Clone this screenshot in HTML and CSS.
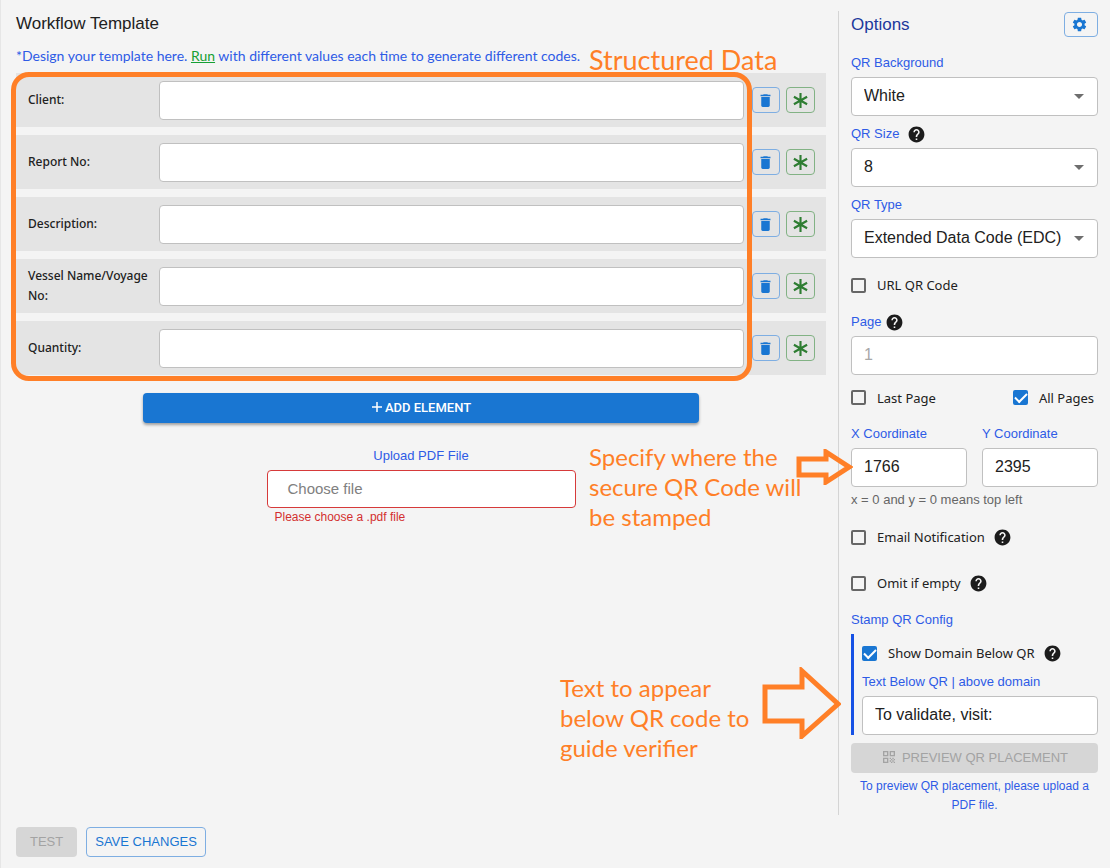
FILE: index.html
```html
<!DOCTYPE html>
<html lang="en">
<head>
<meta charset="utf-8">
<meta name="viewport" content="width=device-width, initial-scale=1">
<title>Workflow Template</title>
<link rel="stylesheet" href="styles.css">
</head>
<body>
<svg class="sprite" aria-hidden="true">
  <symbol id="trash" viewBox="0 0 24 24"><path d="M6 19c0 1.1.9 2 2 2h8c1.1 0 2-.9 2-2V7H6v12zM19 4h-3.500l-1-1h-5l-1 1H5v2h14V4z"/></symbol>
  <symbol id="star" viewBox="0 0 16 16"><path d="M8 1v14M1.800 4.500l12.400 7M14.200 4.500l-12.400 7" fill="none" stroke="currentColor" stroke-width="2"/></symbol>
  <symbol id="help" viewBox="0 0 24 24"><path d="M12 2C6.480 2 2 6.480 2 12s4.480 10 10 10 10-4.480 10-10S17.520 2 12 2zm1 17h-2v-2h2v2zm2.070-7.750l-.9.920C13.450 12.900 13 13.500 13 15h-2v-.5c0-1.100.450-2.100 1.170-2.830l1.240-1.260c.370-.360.590-.860.590-1.410 0-1.100-.9-2-2-2s-2 .9-2 2H8c0-2.210 1.790-4 4-4s4 1.790 4 4c0 .880-.360 1.680-.930 2.250z"/></symbol>
  <symbol id="gear" viewBox="0 0 24 24"><path d="M19.140 12.940c.040-.3.060-.610.060-.940 0-.320-.020-.640-.070-.940l2.030-1.580c.180-.140.230-.410.120-.610l-1.920-3.320c-.120-.220-.370-.290-.590-.220l-2.390.960c-.5-.380-1.030-.7-1.620-.940l-.360-2.540c-.040-.240-.240-.410-.480-.410h-3.840c-.240 0-.430.170-.470.410l-.360 2.540c-.590.240-1.130.570-1.620.940l-2.390-.960c-.220-.080-.470 0-.590.220L2.740 8.870c-.120.210-.080.470.120.610l2.030 1.580c-.050.3-.090.630-.090.940s.020.640.070.940l-2.030 1.580c-.180.140-.230.410-.120.610l1.920 3.320c.120.220.370.290.590.220l2.390-.960c.5.380 1.030.7 1.620.940l.360 2.540c.050.240.240.410.480.410h3.840c.240 0 .440-.170.470-.410l.360-2.540c.590-.240 1.130-.560 1.620-.940l2.390.960c.220.080.470 0 .590-.220l1.920-3.320c.120-.220.070-.470-.120-.610l-2.010-1.580zM12 15.600c-1.980 0-3.600-1.620-3.600-3.600s1.620-3.600 3.600-3.600 3.600 1.620 3.600 3.600-1.620 3.600-3.600 3.600z"/></symbol>
  <symbol id="caret" viewBox="0 0 10 5"><path d="M0 0h10L5 5z"/></symbol>
  <symbol id="qr" viewBox="0 0 24 24"><path d="M3 11h8V3H3v8zm2-6h4v4H5V5zM3 21h8v-8H3v8zm2-6h4v4H5v-4zM13 3v8h8V3h-8zm6 6h-4V5h4v4zM19 19h2v2h-2zM13 13h2v2h-2zM15 15h2v2h-2zM13 17h2v2h-2zM15 19h2v2h-2zM17 17h2v2h-2zM17 13h2v2h-2zM19 15h2v2h-2z"/></symbol>
</svg>

<div class="page">
  <main class="template">
    <h1 class="title">Workflow Template</h1>
    <p class="hint">*Design your template here. <a class="run" href="#">Run</a> with different values each time to generate different codes.</p>

    <div class="rows">
      <div class="row">
        <label class="row-label" for="client">Client:</label>
        <input class="field" id="client" type="text">
        <button class="icon-btn" type="button" aria-label="Delete"><svg class="icon"><use href="#trash"/></svg></button>
        <button class="icon-btn green" type="button" aria-label="Required"><svg class="icon"><use href="#star"/></svg></button>
      </div>
      <div class="row">
        <label class="row-label" for="report">Report No:</label>
        <input class="field" id="report" type="text">
        <button class="icon-btn" type="button" aria-label="Delete"><svg class="icon"><use href="#trash"/></svg></button>
        <button class="icon-btn green" type="button" aria-label="Required"><svg class="icon"><use href="#star"/></svg></button>
      </div>
      <div class="row">
        <label class="row-label" for="description">Description:</label>
        <input class="field" id="description" type="text">
        <button class="icon-btn" type="button" aria-label="Delete"><svg class="icon"><use href="#trash"/></svg></button>
        <button class="icon-btn green" type="button" aria-label="Required"><svg class="icon"><use href="#star"/></svg></button>
      </div>
      <div class="row">
        <label class="row-label" for="vessel"><span class="keep">Vessel Name/Voyage</span> No:</label>
        <input class="field" id="vessel" type="text">
        <button class="icon-btn" type="button" aria-label="Delete"><svg class="icon"><use href="#trash"/></svg></button>
        <button class="icon-btn green" type="button" aria-label="Required"><svg class="icon"><use href="#star"/></svg></button>
      </div>
      <div class="row">
        <label class="row-label" for="quantity">Quantity:</label>
        <input class="field" id="quantity" type="text">
        <button class="icon-btn" type="button" aria-label="Delete"><svg class="icon"><use href="#trash"/></svg></button>
        <button class="icon-btn green" type="button" aria-label="Required"><svg class="icon"><use href="#star"/></svg></button>
      </div>
      <div class="frame"></div>
    </div>

    <button class="btn add" type="button"><svg class="plus" viewBox="0 0 12 12"><path d="M6 1v10M1 6h10" fill="none" stroke="currentColor" stroke-width="1.500"/></svg>ADD ELEMENT</button>

    <div class="upload">
      <label class="label centered" for="pdf">Upload PDF File</label>
      <label class="file" for="pdf">Choose file</label>
      <input class="file-input" id="pdf" type="file" accept=".pdf">
      <p class="error">Please choose a .pdf file</p>
    </div>

    <p class="note note-data">Structured Data</p>
    <p class="note note-position">Specify where the<br>secure QR Code will<br>be stamped</p>
    <p class="note note-text">Text to appear<br>below QR code to<br>guide verifier</p>
    <svg class="arrow arrow-small" viewBox="0 0 58 36"><path d="M4 10h27V3l23 15-23 15v-7H4z"/></svg>
    <svg class="arrow arrow-large" viewBox="0 0 80 72"><path d="M4 20h37V4l36 33-36 32V54H4z"/></svg>
  </main>

  <aside class="options">
    <div class="options-head">
      <h2 class="options-title">Options</h2>
      <button class="settings" type="button" aria-label="Settings"><svg class="icon gear"><use href="#gear"/></svg></button>
    </div>
    <div class="group">
      <label class="label" for="bg">QR Background</label>
      <div class="select"><select class="field" id="bg"><option>White</option></select><svg class="caret"><use href="#caret"/></svg></div>
    </div>
    <div class="group">
      <div class="label-line wide"><label class="label" for="size">QR Size</label><svg class="help"><use href="#help"/></svg></div>
      <div class="select"><select class="field" id="size"><option>8</option></select><svg class="caret"><use href="#caret"/></svg></div>
    </div>
    <div class="group">
      <label class="label" for="type">QR Type</label>
      <div class="select"><select class="field" id="type"><option>Extended Data Code (EDC)</option></select><svg class="caret"><use href="#caret"/></svg></div>
    </div>
    <label class="check"><input class="box" type="checkbox">URL QR Code</label>
    <div class="group">
      <div class="label-line"><label class="label" for="pg">Page</label><svg class="help"><use href="#help"/></svg></div>
      <input class="field" id="pg" type="text" placeholder="1">
      <div class="split">
        <label class="check"><input class="box" type="checkbox">Last Page</label>
        <label class="check"><input class="box" type="checkbox" checked>All Pages</label>
      </div>
    </div>
    <div class="coords">
      <div class="group">
        <label class="label" for="x">X Coordinate</label>
        <input class="field" id="x" type="text" value="1766">
      </div>
      <div class="group">
        <label class="label" for="y">Y Coordinate</label>
        <input class="field" id="y" type="text" value="2395">
      </div>
      <p class="helper">x = 0 and y = 0 means top left</p>
    </div>
    <div class="label-line wide"><label class="check"><input class="box" type="checkbox">Email Notification</label><svg class="help"><use href="#help"/></svg></div>
    <div class="label-line wide"><label class="check"><input class="box" type="checkbox">Omit if empty</label><svg class="help"><use href="#help"/></svg></div>
    <div class="group">
      <h3 class="label">Stamp QR Config</h3>
      <div class="stamp">
        <div class="label-line wide"><label class="check"><input class="box" type="checkbox" checked>Show Domain Below QR</label><svg class="help"><use href="#help"/></svg></div>
        <div class="group">
          <label class="label" for="below">Text Below QR | above domain</label>
          <input class="field" id="below" type="text" value="To validate, visit:">
        </div>
      </div>
    </div>
    <div class="preview">
      <button class="btn disabled" type="button" disabled><svg class="qr"><use href="#qr"/></svg>PREVIEW QR PLACEMENT</button>
      <p class="preview-hint">To preview QR placement, please upload a PDF file.</p>
    </div>
  </aside>

  <footer class="actions">
    <button class="btn disabled test" type="button" disabled>TEST</button>
    <button class="btn outlined" type="button">SAVE CHANGES</button>
  </footer>
</div>
</body>
</html>
```
FILE: styles.css
```css
* { box-sizing: border-box; }

body {
  margin: 0;
  background: #f4f4f4;
  color: #212121;
  font: 13px/20px "Liberation Sans", Arial, sans-serif;
}

h1, h2, h3, p { margin: 0; font-weight: 400; }
button, input, select { font-family: inherit; margin: 0; }
svg { fill: currentColor; flex: none; }
.sprite { display: none; }

.page {
  display: grid;
  grid-template-columns: minmax(0, 1fr) 272px;
  min-height: 100vh;
  align-content: start;
  padding-top: 11px;
  border-left: 1px solid #e6e6e6;
}

/* Template editor */
.template { position: relative; padding: 0 12px 0 15px; }
.title { font-size: 17px; line-height: 26px; }
.hint { margin: 9px 0 7px; font-family: Lato, sans-serif; font-size: 14px; color: #2e5be6; }
.run { color: #16a034; }

.rows { position: relative; display: grid; gap: 8px; }
.row {
  display: grid;
  grid-template-columns: 131px minmax(0, 1fr) 28px 35px;
  align-items: center;
  min-height: 54px;
  padding: 0 11px 0 12px;
  background: #e4e4e4;
}
.row .field { width: auto; margin-right: 8px; }
.row .icon-btn { justify-self: end; }
.row-label { font: 500 12px/20px "Noto Sans", sans-serif; }
.keep { white-space: nowrap; }

.field {
  width: 100%;
  height: 39px;
  padding: 0 13px;
  border: 1px solid #c0c0c0;
  border-radius: 4px;
  background: #fff;
  color: #212121;
  font-size: 16px;
}
.options .field { padding: 0 12px 2px; }
.field::placeholder { color: #a8a8a8; opacity: 1; }

.icon-btn, .settings {
  display: grid;
  place-items: center;
  width: 28px;
  height: 26px;
  padding: 0 1px 0 0;
  border: 1px solid #7eaee2;
  border-radius: 4px;
  background: transparent;
  color: #1976d2;
}
.green { width: 29px; padding: 0; border-color: #82b284; color: #2e7d32; }
.icon { width: 17px; height: 17px; }
.settings { width: 34px; height: 25px; padding-right: 3px; }

.frame {
  position: absolute;
  inset: -1px 74px -6px -5px;
  border: 5px solid #ff7f27;
  border-radius: 18px;
  pointer-events: none;
}

.btn {
  display: flex;
  align-items: center;
  justify-content: center;
  height: 30px;
  padding: 0 8px 2px;
  border: 0;
  border-radius: 4px;
  font-size: 13px;
}
.add {
  width: calc(100% - 254px);
  margin: 18px auto 0;
  gap: 2px;
  background: #1976d2;
  color: #fff;
  font-family: Roboto, sans-serif;
  font-weight: 500;
  box-shadow: 0 2px 3px rgba(0, 0, 0, 0.35);
}
.plus { width: 12px; height: 12px; }

.upload { width: 309px; margin: 23px auto 0; }
.label { font-size: 13px; line-height: 20px; color: #2e5be6; }
.centered { display: block; text-align: center; }
.file {
  display: block;
  margin-top: 4px;
  padding: 0 20px;
  border: 1px solid #d63a3a;
  border-radius: 4px;
  background: #fff;
  color: #808080;
  font-size: 15px;
  line-height: 36px;
}
.file-input { position: absolute; width: 1px; height: 1px; opacity: 0; }
.error { padding-left: 8px; color: #d32f2f; font-size: 12px; line-height: 18px; }

/* Handwritten annotations */
.note {
  position: absolute;
  right: 0;
  color: #ff7f27;
  font: 24px/30px "Ink Free", Lato, cursive;
  white-space: nowrap;
}
.note-data { top: 34px; width: 249px; font-size: 27px; }
.note-position { top: 431px; width: 249px; }
.note-text { top: 662px; width: 278px; }
.arrow {
  position: absolute;
  fill: none;
  stroke: #ff7f27;
  stroke-width: 5;
  z-index: 1;
}
.arrow-small { top: 438px; right: -15px; width: 58px; height: 36px; }
.arrow-large { top: 656px; right: -3px; width: 80px; height: 72px; }

/* Options panel */
.options {
  display: flex;
  flex-direction: column;
  gap: 8px;
  padding: 1px 12px 0;
  border-left: 1px solid #d4d4d4;
}
.options-head {
  display: flex;
  align-items: center;
  justify-content: space-between;
  margin-bottom: 8px;
}
.options-title { font-size: 17px; line-height: 25px; color: #20389c; }
.group { display: grid; gap: 4px; }
.label-line { display: flex; align-items: center; gap: 4px; }
.wide { gap: 8px; }
.help { width: 19px; height: 19px; color: #1c1c1c; }
.select { display: grid; align-items: center; }
.select .field, .caret { grid-area: 1 / 1; }
.select .field { appearance: none; }
.caret {
  justify-self: end;
  width: 10px;
  height: 5px;
  margin-right: 14px;
  color: #6e6e6e;
  pointer-events: none;
}

.check {
  display: flex;
  align-items: center;
  gap: 11px;
  height: 38px;
  font: 13px/20px "Noto Sans", sans-serif;
}
.box {
  appearance: none;
  display: grid;
  place-items: center;
  width: 15px;
  height: 15px;
  border: 2px solid #666;
  border-radius: 2px;
}
.box:checked { border-color: #1976d2; background: #1976d2; }
.box:checked::before {
  content: "";
  width: 10px;
  height: 5px;
  border: solid #fff;
  border-width: 0 0 2px 2px;
  transform: translateY(-1px) rotate(-45deg);
}
.split { display: flex; justify-content: space-between; padding-right: 4px; }
.split .check { height: 37px; }
.coords { display: grid; grid-template-columns: 1fr 1fr; gap: 3px 15px; }
.helper { grid-column: 1 / -1; color: #666; }
.stamp { padding-left: 8px; border-left: 3px solid #1551e5; }
.preview { display: grid; gap: 4px; }
.preview-hint { color: #2e5be6; font-size: 12px; line-height: 19px; text-align: center; }
.qr { width: 16px; height: 16px; margin-right: 5px; }
.disabled { background: #d6d6d6; color: #a3a3a3; }

.actions { display: flex; gap: 9px; padding: 12px 15px 10px; }
.test { padding: 0 14px 2px; }
.outlined { border: 1px solid #7eaee2; background: transparent; color: #1976d2; }
```
